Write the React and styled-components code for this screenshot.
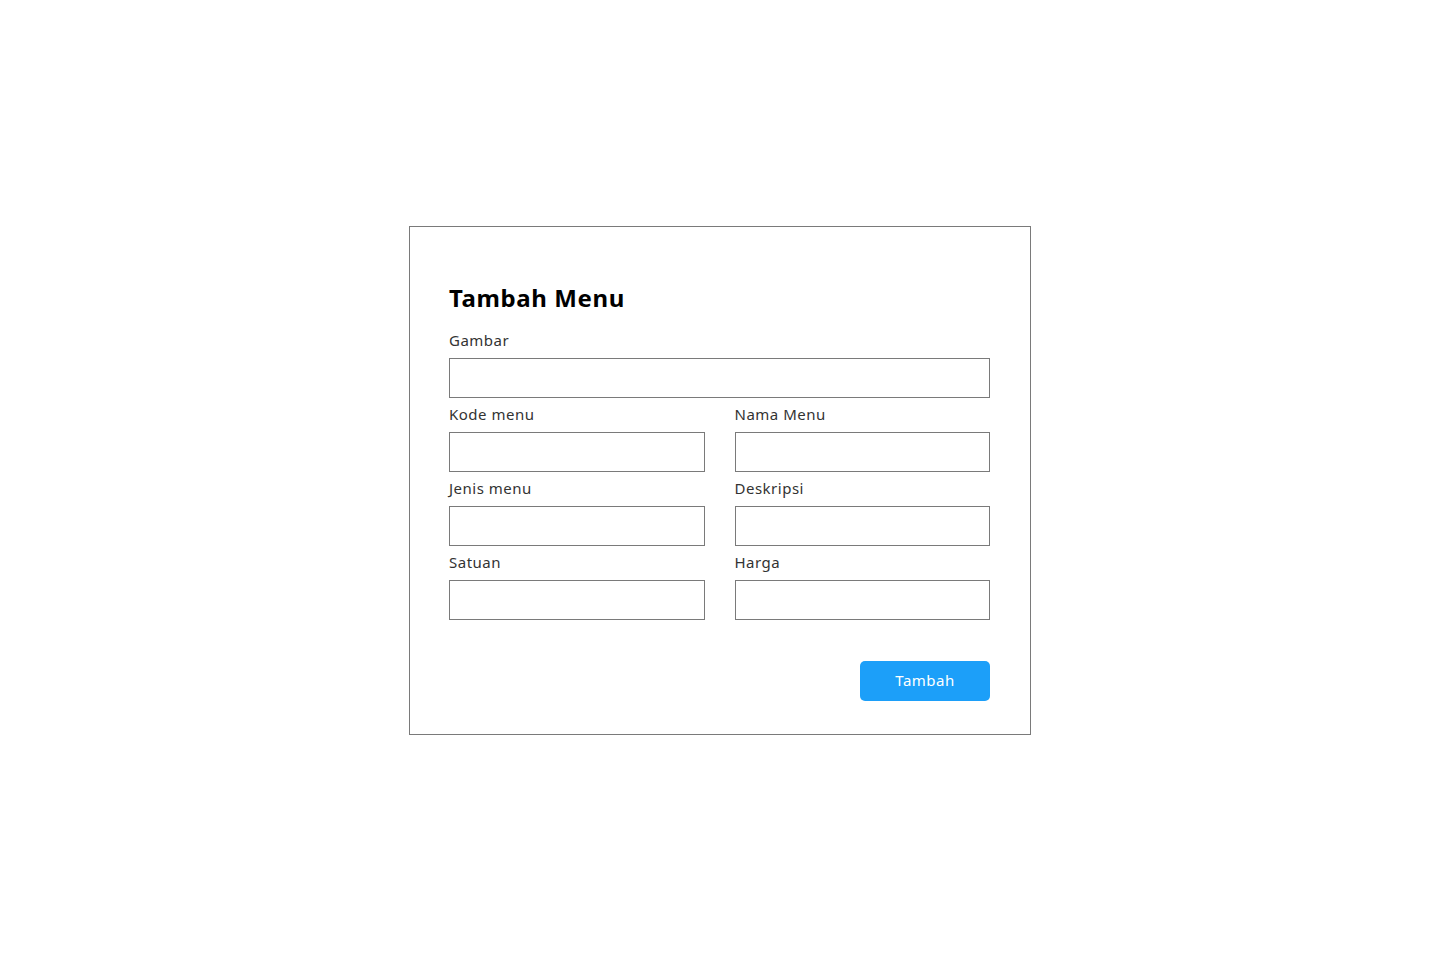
import React from 'react';
import styled, { createGlobalStyle } from 'styled-components';

const GlobalStyle = createGlobalStyle`
    * {
        box-sizing: border-box;
    }
    body {
        margin: 0;
        background: #fff;
        font-family: "Noto Sans", "Open Sans", sans-serif;
    }
`;

const fields = [
    { label: 'Kode menu', name: 'kode' },
    { label: 'Nama Menu', name: 'nama' },
    { label: 'Jenis menu', name: 'jenis' },
    { label: 'Deskripsi', name: 'deskripsi' },
    { label: 'Satuan', name: 'satuan' },
    { label: 'Harga', name: 'harga' },
];

export default function App() {
    return (
        <Page>
            <GlobalStyle />
            <Card>
                <Title>Tambah Menu</Title>
                <Field>
                    <Label htmlFor="gambar">Gambar</Label>
                    <Input id="gambar" />
                </Field>
                <Grid>
                    {fields.map((f) => (
                        <Field key={f.name}>
                            <Label htmlFor={f.name}>{f.label}</Label>
                            <Input id={f.name} />
                        </Field>
                    ))}
                </Grid>
                <Actions>
                    <Button type="button">Tambah</Button>
                </Actions>
            </Card>
        </Page>
    );
}

// Page
const Page = styled.div`
    min-height: 100vh;
    display: flex;
    align-items: center;
    justify-content: center;
`;

// Card
const Card = styled.div`
    width: 622px;
    height: 509px;
    border: 1px solid #7a7a7a;
    padding: 56px 40px 33px 39px;
    display: flex;
    flex-direction: column;
`;

const Title = styled.h1`
    margin: 0 0 17px;
    font-size: 24px;
    line-height: 30px;
    font-weight: 700;
    letter-spacing: 0.6px;
    color: #000;
`;

const Field = styled.div`
    display: flex;
    flex-direction: column;
    margin-bottom: 6px;
`;

const Grid = styled.div`
    display: grid;
    grid-template-columns: 1fr 1fr;
    column-gap: 30px;
`;

const Label = styled.label`
    font-size: 15px;
    line-height: 20px;
    letter-spacing: 0.5px;
    color: #333;
    margin-bottom: 8px;
`;

const Input = styled.input`
    height: 40px;
    border: 1px solid #7a7a7a;
    padding: 0 10px;
    font-family: inherit;
    font-size: 15px;
    outline: none;
`;

// Button
const Actions = styled.div`
    margin-top: auto;
    display: flex;
    justify-content: flex-end;
`;

const Button = styled.button`
    width: 130px;
    height: 40px;
    padding: 0 0 2px;
    background: #1c9ff9;
    color: #fff;
    border: none;
    border-radius: 5px;
    font-family: inherit;
    font-size: 15px;
    letter-spacing: 0.5px;
    cursor: pointer;
`;
